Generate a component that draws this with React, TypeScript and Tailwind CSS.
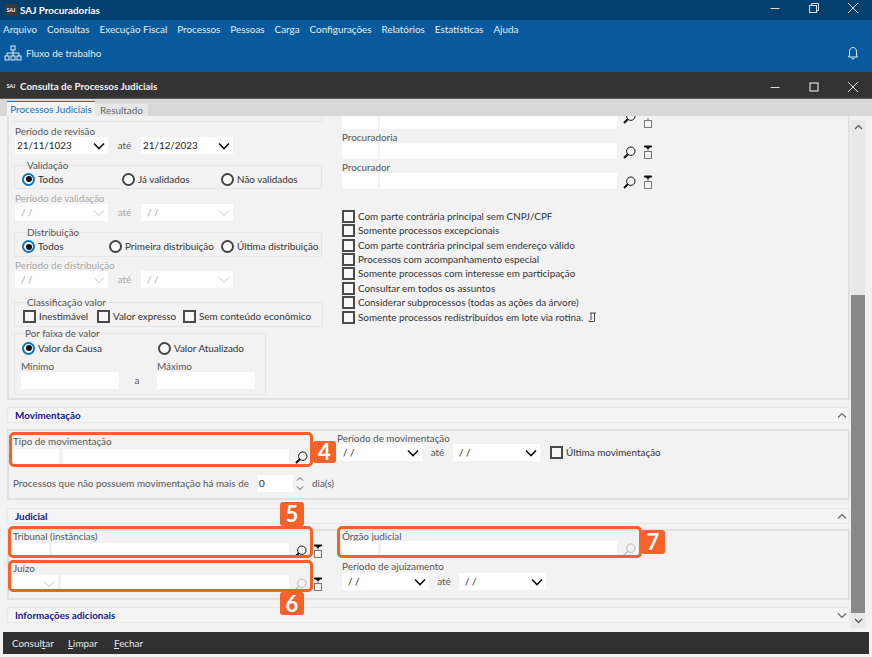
import React from "react";

const font = { fontFamily: 'Lato, "Noto Sans", sans-serif' };

function Chevron({ dim, className = "" }: { dim?: boolean; className?: string }) {
  return (
    <svg width="12" height="8" viewBox="0 0 12 8" className={className} fill="none">
      <path d="M1 1.5 L6 6.5 L11 1.5" stroke={dim ? "#c4c4c4" : "#111"} strokeWidth={dim ? 1 : 1.6} />
    </svg>
  );
}

function SearchIcon({ dim }: { dim?: boolean }) {
  const c = dim ? "#b8b8b8" : "#111";
  return (
    <svg width="13" height="13" viewBox="0 0 13 13" fill="none" className="shrink-0">
      <circle cx="7.8" cy="5.2" r="4.2" stroke={c} strokeWidth={1} />
      <path d="M4.8 8.2 L1 12" stroke={c} strokeWidth={dim ? 1.2 : 2} />
    </svg>
  );
}

function StackIcon() {
  return (
    <svg width="10" height="15" viewBox="0 0 10 15" fill="none" className="shrink-0">
      <path d="M1 0.5 H9 L5 4.5 Z" fill="#111" />
      <rect x="1" y="1" width="8" height="1.4" fill="#111" />
      <path d="M5 4 V6" stroke="#777" />
      <rect x="1.5" y="6.5" width="7" height="7" stroke="#777" />
    </svg>
  );
}

function Radio({ on }: { on?: boolean }) {
  return on ? (
    <span className="flex h-[13px] w-[13px] shrink-0 items-center justify-center rounded-full border-2 border-[#0a74c9] bg-white">
      <span className="h-[6px] w-[6px] rounded-full bg-[#111]" />
    </span>
  ) : (
    <span className="h-[13px] w-[13px] shrink-0 rounded-full border-2 border-[#444] bg-white" />
  );
}

function RadioItem({ on, label, w }: { on?: boolean; label: string; w: string }) {
  return (
    <div className={`flex items-center gap-[3px] ${w}`}>
      <Radio on={on} />
      <span className="whitespace-nowrap text-[9.9px] leading-[13px] text-[#333]">{label}</span>
    </div>
  );
}

function Check({ label, w, extra }: { label: string; w?: string; extra?: React.ReactNode }) {
  return (
    <div className={`flex items-center gap-[3px] ${w ?? ""}`}>
      <span className="h-[13px] w-[13px] shrink-0 border-2 border-[#4a4a4a] bg-[#f7f7f7]" />
      <span className="whitespace-nowrap text-[9.9px] leading-[13px] text-[#333]">{label}</span>
      {extra}
    </div>
  );
}

function FieldLabel({ children, dim, cls = "" }: { children: React.ReactNode; dim?: boolean; cls?: string }) {
  return (
    <div className={`h-[11px] whitespace-nowrap text-[9.9px] leading-[11px] ${dim ? "text-[#a8a8a8]" : "text-[#555]"} ${cls}`}>
      {children}
    </div>
  );
}

function DateBox({ value, dim, w }: { value: string; dim?: boolean; w: string }) {
  const indent = value.length < 5 ? "pl-[4px]" : "pl-0";
  return (
    <div className={`flex h-[17px] items-center justify-between bg-white pl-[2px] pr-[3px] ${w}`}>
      <span className={`${indent} text-[9.9px] leading-[13px] ${dim ? "text-[#a8a8a8]" : "text-[#222]"}`}>{value}</span>
      <Chevron dim={dim} />
    </div>
  );
}

function DateRange({
  a,
  b,
  dim,
  wa,
  wb,
  ate,
}: {
  a: string;
  b: string;
  dim?: boolean;
  wa: string;
  wb: string;
  ate: string;
}) {
  return (
    <div className="flex items-center">
      <DateBox value={a} dim={dim} w={wa} />
      <span className={`flex justify-center text-[9.9px] leading-[13px] ${dim ? "text-[#a8a8a8]" : "text-[#555]"} ${ate}`}>até</span>
      <DateBox value={b} dim={dim} w={wb} />
    </div>
  );
}

function Legend({ children, cls = "left-[12px]" }: { children: React.ReactNode; cls?: string }) {
  return (
    <span className={`absolute -top-[7px] whitespace-nowrap text-[9.9px] leading-[13px] text-[#555] ${cls}`}>
      {children}
    </span>
  );
}

function SectionHeader({ title, open }: { title: string; open?: boolean }) {
  return (
    <div className="flex h-[16px] items-center justify-between rounded-[2px] border border-[#e8e8e8] bg-[#f4f4f4] pl-[7px] pr-[1px]">
      <span className="text-[9.9px] font-bold leading-[13px] text-[#14148c]">{title}</span>
      <svg width="10" height="7" viewBox="0 0 10 7" fill="none" className="mr-[1px]">
        <path d={open ? "M1 5.5 L5 1.5 L9 5.5" : "M1 1.5 L5 5.5 L9 1.5"} stroke="#666" strokeWidth="1.2" />
      </svg>
    </div>
  );
}

function Badge({ n, cls }: { n: string; cls: string }) {
  return (
    <div className={`absolute z-20 flex items-center justify-center rounded-[3px] bg-[#f4622a] text-[22px] font-bold leading-none text-white ${cls}`}>
      {n}
    </div>
  );
}

function Highlight({ cls }: { cls: string }) {
  return <div className={`pointer-events-none absolute z-20 rounded-[5px] border-[3px] border-[#f4622a] ${cls}`} />;
}

function SajLogo({ bg }: { bg: boolean }) {
  return (
    <span className={`flex h-[12px] w-[12px] items-center justify-center text-[5px] font-bold leading-none text-white ${bg ? "bg-[#3a3a3a]" : ""}`}>
      SAJ
    </span>
  );
}

function WinControls({ restore }: { restore?: boolean }) {
  return (
    <div className="flex items-center">
      <svg width="12" height="12" viewBox="0 0 12 12" fill="none" className="mr-[27px]">
        <path d="M1.5 6.5 H10.5" stroke="#ddd" strokeWidth="1" />
      </svg>
      {restore ? (
        <svg width="12" height="12" viewBox="0 0 12 12" fill="none" className="mr-[27px]">
          <rect x="1.5" y="3.5" width="7" height="7" stroke="#ddd" />
          <path d="M3.5 3 V1.5 H10.5 V8.5 H9" stroke="#ddd" />
        </svg>
      ) : (
        <svg width="12" height="12" viewBox="0 0 12 12" fill="none" className="mr-[27px]">
          <rect x="2" y="2" width="8" height="8" stroke="#ddd" strokeWidth="1.2" />
        </svg>
      )}
      <svg width="12" height="12" viewBox="0 0 12 12" fill="none">
        <path d="M1 1 L11 11 M11 1 L1 11" stroke="#ddd" strokeWidth="1" />
      </svg>
    </div>
  );
}

const menu = [
  "Arquivo",
  "Consultas",
  "Execução Fiscal",
  "Processos",
  "Pessoas",
  "Carga",
  "Configurações",
  "Relatórios",
  "Estatísticas",
  "Ajuda",
];

const checks = [
  "Com parte contrária principal sem CNPJ/CPF",
  "Somente processos excepcionais",
  "Com parte contrária principal sem endereço válido",
  "Processos com acompanhamento especial",
  "Somente processos com interesse em participação",
  "Consultar em todos os assuntos",
  "Considerar subprocessos (todas as ações da árvore)",
];

export default function App() {
  return (
    <div style={font} className="flex h-[657px] w-[872px] flex-col overflow-hidden bg-[#f2f2f2]">
      {/* Title bar */}
      <div className="flex h-[20px] items-center justify-between bg-[#03406f] pl-[5px] pr-[13px]">
        <div className="flex items-center gap-[3px]">
          <SajLogo bg />
          <span className="text-[9.9px] font-bold leading-[13px] text-white">SAJ Procuradorias</span>
        </div>
        <div className="-mt-[5px]">
          <WinControls restore />
        </div>
      </div>

      {/* Menu */}
      <div className="flex h-[52px] flex-col bg-[#085a9c]">
        <div className="flex h-[18px] items-center gap-[10px] pl-[3px]">
          {menu.map((m) => (
            <span key={m} className="whitespace-nowrap text-[9.9px] leading-[13px] text-[#e6edf3]">
              {m}
            </span>
          ))}
        </div>
        <div className="flex h-[30px] items-center justify-between pl-[4px] pr-[13px]">
          <div className="flex items-center gap-[4px]">
            <svg width="18" height="16" viewBox="0 0 18 16" fill="none" stroke="#e6edf3" strokeWidth="1">
              <rect x="7" y="1" width="4" height="4" />
              <rect x="1" y="11" width="4" height="4" />
              <rect x="7" y="11" width="4" height="4" />
              <rect x="13" y="11" width="4" height="4" />
              <path d="M9 5 V11 M3 11 V8 H15 V11" />
            </svg>
            <span className="text-[9.9px] leading-[13px] text-[#e6edf3]">Fluxo de trabalho</span>
          </div>
          <svg width="12" height="15" viewBox="0 0 12 15" fill="none" stroke="#e6edf3" strokeWidth="1">
            <path d="M1.5 11 H10.5 L9.5 9 V5.5 C9.5 3.2 8 1.5 6 1.5 C4 1.5 2.5 3.2 2.5 5.5 V9 Z" />
            <path d="M4.8 12 C5 13.5 7 13.5 7.2 12" />
          </svg>
        </div>
      </div>

      {/* Window title */}
      <div className="flex h-[27px] items-center justify-between border-b border-[#5a5a5a] bg-[#333333] pl-[5px] pr-[13px] pt-[3px]">
        <div className="flex items-center gap-[3px]">
          <SajLogo bg={false} />
          <span className="text-[9.9px] font-bold leading-[13px] text-[#f2f2f2]">Consulta de Processos Judiciais</span>
        </div>
        <WinControls />
      </div>

      {/* Tabs */}
      <div className="flex h-[17px] items-end bg-[#d8d8d8] pl-[7px]">
        <div className="flex h-[15px] w-[88px] items-center justify-center border-t border-[#0a74c9] bg-[#f2f2f2] text-[9.9px] leading-[13px] text-[#1a6fb5]">
          Processos Judiciais
        </div>
        <div className="flex h-[12px] w-[53px] items-center justify-center bg-[#e6e6e6] text-[9.9px] leading-[12px] text-[#666]">
          Resultado
        </div>
      </div>

      {/* Body */}
      <div className="relative flex h-[516px] pl-[7px] pr-[7px]">
        <div className="flex w-[843px] flex-col">
          {/* Top panel */}
          <div className="flex h-[284px] overflow-hidden border-b-2 border-l-2 border-r-2 border-[#e0e0e0]">
            {/* Left column */}
            <div className="flex w-[333px] shrink-0 flex-col pl-[5px]">
              <div className="h-[6px] w-[308px] border-b border-l border-r border-[#e6e6e6]" />
              <FieldLabel cls="mt-[4px] ml-[1px]">Período de revisão</FieldLabel>
              <div className="ml-[1px]">
                <DateRange a="21/11/1023" b="21/12/2023" wa="w-[93px]" wb="w-[92px]" ate="w-[33px]" />
              </div>

              <div className="relative mt-[11px] flex h-[24px] w-[308px] items-center border border-[#e6e6e6] pl-[7px] pt-[4px]">
                <Legend>Validação</Legend>
                <RadioItem on label="Todos" w="w-[100px]" />
                <RadioItem label="Já validados" w="w-[99px]" />
                <RadioItem label="Não validados" w="w-[90px]" />
              </div>

              <FieldLabel dim cls="mt-[4px] ml-[1px]">Período de validação</FieldLabel>
              <div className="ml-[1px]">
                <DateRange dim a="/ /" b="/ /" wa="w-[93px]" wb="w-[92px]" ate="w-[33px]" />
              </div>

              <div className="relative mt-[11px] flex h-[25px] w-[308px] items-center border border-[#e6e6e6] pl-[7px] pt-[4px]">
                <Legend>Distribuição</Legend>
                <RadioItem on label="Todos" w="w-[87px]" />
                <RadioItem label="Primeira distribuição" w="w-[112px]" />
                <RadioItem label="Última distribuição" w="w-[90px]" />
              </div>

              <FieldLabel dim cls="mt-[3px] ml-[1px]">Período de distribuição</FieldLabel>
              <div className="ml-[1px]">
                <DateRange dim a="/ /" b="/ /" wa="w-[93px]" wb="w-[92px]" ate="w-[33px]" />
              </div>

              <div className="relative mt-[14px] flex h-[25px] w-[309px] items-center border border-[#e6e6e6] pl-[8px] pt-[4px]">
                <Legend>Classificação valor</Legend>
                <Check label="Inestimável" w="w-[74px]" />
                <Check label="Valor expresso" w="w-[86px]" />
                <Check label="Sem conteúdo econômico" />
              </div>

              <div className="relative mt-[6px] flex h-[62px] w-[252px] flex-col border border-[#e6e6e6] pl-[7px] pt-[7px]">
                <Legend cls="left-[10px]">Por faixa de valor</Legend>
                <div className="flex h-[14px] items-center">
                  <RadioItem on label="Valor da Causa" w="w-[136px]" />
                  <RadioItem label="Valor Atualizado" w="w-[100px]" />
                </div>
                <div className="ml-[-1px] mt-[6px] flex">
                  <FieldLabel cls="w-[136px]">Mínimo</FieldLabel>
                  <FieldLabel>Máximo</FieldLabel>
                </div>
                <div className="ml-[-1px] flex items-center">
                  <div className="h-[17px] w-[98px] bg-white" />
                  <span className="w-[38px] pr-[2px] text-center text-[9.9px] leading-[13px] text-[#555]">a</span>
                  <div className="h-[17px] w-[98px] bg-white" />
                </div>
              </div>
            </div>

            {/* Right column */}
            <div className="flex flex-1 flex-col">
              <div className="flex h-[13px] items-start overflow-hidden">
                <div className="h-[13px] w-[36px] bg-white" />
                <div className="ml-[2px] h-[13px] w-[237px] bg-white" />
                <div className="ml-[6px] -mt-[5px]">
                  <SearchIcon />
                </div>
                <svg width="10" height="10" viewBox="0 0 10 10" fill="none" className="ml-[7px] mt-[2px]">
                  <path d="M5 0 V3" stroke="#777" />
                  <rect x="1.5" y="2.5" width="7" height="7" stroke="#777" />
                </svg>
              </div>
              <FieldLabel cls="mt-[3px]">Procuradoria</FieldLabel>
              <div className="flex h-[16px] items-center">
                <div className="h-[16px] w-[36px] bg-white" />
                <div className="ml-[2px] h-[16px] w-[237px] bg-white" />
                <div className="ml-[6px] mt-[2px]">
                  <SearchIcon />
                </div>
                <div className="ml-[7px] mt-[2px]">
                  <StackIcon />
                </div>
              </div>
              <FieldLabel cls="mt-[3px]">Procurador</FieldLabel>
              <div className="flex h-[16px] items-center">
                <div className="h-[16px] w-[36px] bg-white" />
                <div className="ml-[2px] h-[16px] w-[237px] bg-white" />
                <div className="ml-[6px] mt-[2px]">
                  <SearchIcon />
                </div>
                <div className="ml-[7px] mt-[2px]">
                  <StackIcon />
                </div>
              </div>
              <div className="mt-[20px] flex flex-col">
                {checks.map((c) => (
                  <div key={c} className="flex h-[14.43px] items-center">
                    <Check label={c} />
                  </div>
                ))}
                <div className="flex h-[14.43px] items-center">
                  <Check
                    label="Somente processos redistribuídos em lote via rotina."
                    extra={
                      <svg width="9" height="11" viewBox="0 0 9 11" fill="none" className="ml-[2px]" stroke="#333" strokeWidth="0.9">
                        <path d="M2 1 H8 M6.5 1 V9.5 H1 M1 9.5 V8.5" />
                        <path d="M3 1 V8" />
                      </svg>
                    }
                  />
                </div>
              </div>
            </div>
          </div>

          {/* Movimentação */}
          <div className="mt-[7px]">
            <SectionHeader title="Movimentação" open />
          </div>
          <div className="mt-[6px] flex h-[71px] flex-col border-2 border-[#e0e0e0] pl-[4px]">
            <div className="flex">
              <div className="flex w-[324px] shrink-0 flex-col pt-[5px]">
                <FieldLabel>Tipo de movimentação</FieldLabel>
                <div className="mt-[2px] flex items-center">
                  <div className="h-[15px] w-[46px] bg-white" />
                  <div className="ml-[4px] h-[15px] w-[226px] bg-white" />
                  <div className="ml-[6px] mt-[1px]">
                    <SearchIcon />
                  </div>
                </div>
              </div>
              <div className="flex flex-col pt-[2px]">
                <FieldLabel>Período de movimentação</FieldLabel>
                <div className="flex items-center">
                  <DateRange a="/ /" b="/ /" wa="w-[85px]" wb="w-[87px]" ate="w-[31px]" />
                  <div className="ml-[10px]">
                    <Check label="Última movimentação" />
                  </div>
                </div>
              </div>
            </div>
            <div className="mt-[11px] flex items-center">
              <span className="w-[244px] whitespace-nowrap text-[9.9px] leading-[13px] text-[#555]">
                Processos que não possuem movimentação há mais de
              </span>
              <div className="flex h-[17px] w-[36px] items-center bg-white pl-[2px] text-[9.9px] leading-[13px] text-[#222]">
                0
              </div>
              <svg width="12" height="17" viewBox="0 0 12 17" fill="none" className="ml-[1px]" stroke="#555">
                <path d="M3 5.5 L6 2.5 L9 5.5 M3 11.5 L6 14.5 L9 11.5" />
              </svg>
              <span className="ml-[6px] text-[9.9px] leading-[13px] text-[#555]">dia(s)</span>
            </div>
          </div>

          {/* Judicial */}
          <div className="mt-[8px]">
            <SectionHeader title="Judicial" open />
          </div>
          <div className="mt-[5px] flex h-[71px] border-2 border-[#e0e0e0] pl-[4px]">
            <div className="flex w-[329px] shrink-0 flex-col">
              <FieldLabel>Tribunal (instâncias)</FieldLabel>
              <div className="-mt-[1px] flex items-center">
                <div className="h-[15px] w-[36px] bg-white" />
                <div className="ml-[3px] h-[15px] w-[237px] bg-white" />
                <div className="ml-[5px] mt-[2px]">
                  <SearchIcon />
                </div>
                <div className="ml-[6px] mt-[3px]">
                  <StackIcon />
                </div>
              </div>
              <FieldLabel cls="mt-[4px]">Juízo</FieldLabel>
              <div className="mt-[1px] flex h-[17px] items-center">
                <div className="flex h-[17px] w-[45px] items-center justify-end bg-white pr-[3px]">
                  <Chevron dim />
                </div>
                <div className="ml-[3px] h-[17px] w-[228px] bg-white" />
                <div className="ml-[5px] mt-[2px]">
                  <SearchIcon dim />
                </div>
                <div className="ml-[6px] mt-[2px]">
                  <StackIcon />
                </div>
              </div>
            </div>
            <div className="flex flex-col">
              <FieldLabel>Órgão judicial</FieldLabel>
              <div className="-mt-[1px] flex items-center">
                <div className="h-[15px] w-[36px] bg-white" />
                <div className="ml-[3px] h-[15px] w-[236px] bg-white" />
                <div className="ml-[6px] mt-[2px]">
                  <SearchIcon dim />
                </div>
              </div>
              <FieldLabel cls="mt-[5px]">Período de ajuizamento</FieldLabel>
              <div className="mt-[1px]">
                <DateRange a="/ /" b="/ /" wa="w-[87px]" wb="w-[87px]" ate="w-[30px]" />
              </div>
            </div>
          </div>

          {/* Informações */}
          <div className="mt-[7px]">
            <SectionHeader title="Informações adicionais" />
          </div>
        </div>

        {/* Scrollbar */}
        <div className="ml-[1px] mt-[4px] flex h-[508px] w-[14px] flex-col bg-[#e8e8e8]">
          <div className="flex h-[14px] items-center justify-center">
            <svg width="9" height="6" viewBox="0 0 9 6" fill="none">
              <path d="M1 5 L4.5 1.5 L8 5" stroke="#555" strokeWidth="1.2" />
            </svg>
          </div>
          <div className="mt-[161px] h-[318px] bg-[#888888]" />
          <div className="flex flex-1 items-center justify-center">
            <svg width="9" height="6" viewBox="0 0 9 6" fill="none">
              <path d="M1 1 L4.5 4.5 L8 1" stroke="#555" strokeWidth="1.2" />
            </svg>
          </div>
        </div>

        {/* Annotations: highlight boxes and numbered badges */}
        <Highlight cls="left-[9px] top-[316px] h-[35px] w-[304px]" />
        <Badge n="4" cls="left-[313px] top-[325px] h-[22px] w-[23px]" />
        <Highlight cls="left-[8px] top-[410px] h-[32px] w-[305px]" />
        <Badge n="5" cls="left-[280px] top-[386px] h-[24px] w-[24px]" />
        <Highlight cls="left-[8px] top-[444px] h-[32px] w-[305px]" />
        <Badge n="6" cls="left-[280px] top-[476px] h-[23px] w-[24px]" />
        <Highlight cls="left-[337px] top-[410px] h-[32px] w-[305px]" />
        <Badge n="7" cls="left-[641px] top-[414px] h-[24px] w-[24px]" />
      </div>

      {/* Footer */}
      <div className="mx-[3px] flex h-[22px] items-center bg-[#303030] pl-[9px]">
        <span className="w-[56px] text-[9.9px] leading-[13px] text-[#e8e8e8]">
          Consul<u>t</u>ar
        </span>
        <span className="w-[46px] text-[9.9px] leading-[13px] text-[#e8e8e8]">
          <u>L</u>impar
        </span>
        <span className="text-[9.9px] leading-[13px] text-[#e8e8e8]">
          <u>F</u>echar
        </span>
      </div>
    </div>
  );
}
